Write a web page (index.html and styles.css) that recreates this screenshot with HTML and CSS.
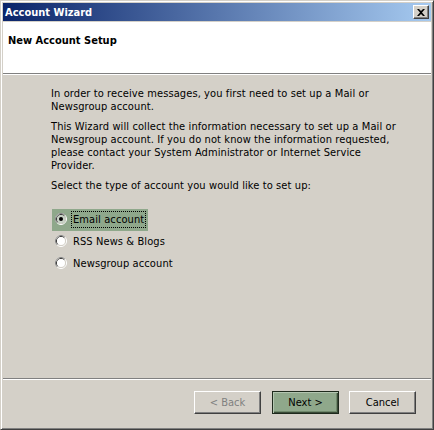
FILE: index.html
```html
<!DOCTYPE html>
<html>
<head>
<meta charset="utf-8">
<link rel="stylesheet" href="styles.css">
</head>
<body>
<div class="window">
  <div class="titlebar">
    <span class="title">Account Wizard</span>
    <span class="close">
      <svg width="8" height="7" viewBox="0 0 8 7"><path d="M0 0H2L4 2L6 0H8L5 3.5L8 7H6L4 5L2 7H0L3 3.5Z" fill="#000"/></svg>
    </span>
  </div>
  <div class="client">
    <div class="header"><h1 class="heading">New Account Setup</h1></div>
    <div class="content">
      <p class="para">In order to receive messages, you first need to set up a Mail or<br>Newsgroup account.</p>
      <p class="para">This Wizard will collect the information necessary to set up a Mail or<br>Newsgroup account. If you do not know the information requested,<br>please contact your System Administrator or Internet Service<br>Provider.</p>
      <p class="para">Select the type of account you would like to set up:</p>
      <ul class="options">
        <li class="option selected">
          <svg class="radio" width="12" height="12" viewBox="0 0 12 12">
            <circle cx="6" cy="6" r="5.5" fill="none" stroke="#fff"/>
            <path d="M2.11 9.89A5.5 5.5 0 0 1 9.89 2.11" fill="none" stroke="#808080"/>
            <circle cx="6" cy="6" r="4.5" fill="none" stroke="#d4d0c8"/>
            <path d="M2.82 9.18A4.5 4.5 0 0 1 9.18 2.82" fill="none" stroke="#404040"/>
            <circle cx="6" cy="6" r="4" fill="#c9d3c7"/>
            <circle cx="6" cy="6" r="2" fill="#000"/>
          </svg>
          <span class="label focus">Email account</span>
        </li>
        <li class="option">
          <svg class="radio" width="12" height="12" viewBox="0 0 12 12">
            <circle cx="6" cy="6" r="5.5" fill="none" stroke="#fff"/>
            <path d="M2.11 9.89A5.5 5.5 0 0 1 9.89 2.11" fill="none" stroke="#808080"/>
            <circle cx="6" cy="6" r="4.5" fill="none" stroke="#d4d0c8"/>
            <path d="M2.82 9.18A4.5 4.5 0 0 1 9.18 2.82" fill="none" stroke="#404040"/>
            <circle cx="6" cy="6" r="4" fill="#fff"/>
          </svg>
          <span class="label">RSS News &amp; Blogs</span>
        </li>
        <li class="option">
          <svg class="radio" width="12" height="12" viewBox="0 0 12 12">
            <circle cx="6" cy="6" r="5.5" fill="none" stroke="#fff"/>
            <path d="M2.11 9.89A5.5 5.5 0 0 1 9.89 2.11" fill="none" stroke="#808080"/>
            <circle cx="6" cy="6" r="4.5" fill="none" stroke="#d4d0c8"/>
            <path d="M2.82 9.18A4.5 4.5 0 0 1 9.18 2.82" fill="none" stroke="#404040"/>
            <circle cx="6" cy="6" r="4" fill="#fff"/>
          </svg>
          <span class="label">Newsgroup account</span>
        </li>
      </ul>
    </div>
    <div class="footer">
      <button class="btn disabled back">&lt; Back</button>
      <button class="btn default">Next &gt;</button>
      <button class="btn">Cancel</button>
    </div>
  </div>
</div>
</body>
</html>
```
FILE: styles.css
```css
html, body {
  margin: 0;
  padding: 0;
  background: #d4d0c8;
}
body {
  font-family: "DejaVu Sans Condensed", "Liberation Sans", sans-serif;
  font-size: 11px;
  color: #000;
}
.window {
  width: 434px;
  height: 430px;
  box-sizing: border-box;
  border: 1px solid;
  border-color: #d4d0c8 #404040 #404040 #d4d0c8;
  box-shadow: inset 1px 1px #fff, inset -1px -1px #808080;
  padding: 2px;
  display: flex;
  flex-direction: column;
  gap: 1px;
  background: #d4d0c8;
}
.titlebar {
  flex: none;
  height: 18px;
  display: flex;
  align-items: center;
  justify-content: space-between;
  padding: 0 2px;
  background: linear-gradient(to right, #0a246a, #a6caf0);
  color: #fff;
  font-weight: bold;
}
.title {
  line-height: 13px;
}
.close {
  width: 16px;
  height: 14px;
  box-sizing: border-box;
  display: flex;
  align-items: center;
  justify-content: center;
  background: #d4d0c8;
  border: 1px solid;
  border-color: #fff #404040 #404040 #fff;
  box-shadow: inset -1px -1px #808080;
}
.client {
  flex: 1;
  display: flex;
  flex-direction: column;
}
.header {
  flex: none;
  box-sizing: border-box;
  background: #fff;
  border-bottom: 1px solid #808080;
  height: 52px;
  padding: 12px 5px 0;
}
.heading {
  margin: 0;
  font-size: 11px;
  font-weight: bold;
  line-height: 13px;
}
.content {
  flex: 1;
  border-top: 1px solid #fff;
  padding: 12px 0 0 48px;
  letter-spacing: 0.1px;
}
.para {
  margin: 0 0 7px;
  line-height: 13px;
  white-space: nowrap;
}
.options {
  list-style: none;
  margin: 17px 0 0 1px;
  padding: 0;
}
.option {
  width: max-content;
  height: 22px;
  box-sizing: border-box;
  display: flex;
  align-items: center;
  gap: 4px;
  padding: 0 2px 2px 3px;
}
.option.selected {
  background: #8fa88b;
}
.radio {
  flex: none;
  display: block;
}
.label {
  line-height: 13px;
  padding: 1px 1px;
  border: 1px dotted transparent;
}
.label.focus {
  border-color: #000;
}
.footer {
  flex: none;
  display: flex;
  justify-content: flex-end;
  gap: 10px;
  border-top: 1px solid #808080;
  box-shadow: inset 0 1px #fff;
  padding: 12px 15px 13px;
}
.btn {
  width: 67px;
  height: 23px;
  box-sizing: border-box;
  padding: 0;
  margin: 0;
  font: inherit;
  color: #000;
  background: #d4d0c8;
  border: 1px solid;
  border-color: #fff #404040 #404040 #fff;
  box-shadow: inset -1px -1px #808080;
}
.btn.back {
  margin-right: 1px;
}
.btn.disabled {
  color: #808080;
}
.btn.default {
  background: #8fa88b;
  border: 1px solid #1e2a1c;
  box-shadow: inset 1px 1px #b4c6b1, inset -1px -1px #3a4a37, inset -2px -2px #6f896b;
}
```
